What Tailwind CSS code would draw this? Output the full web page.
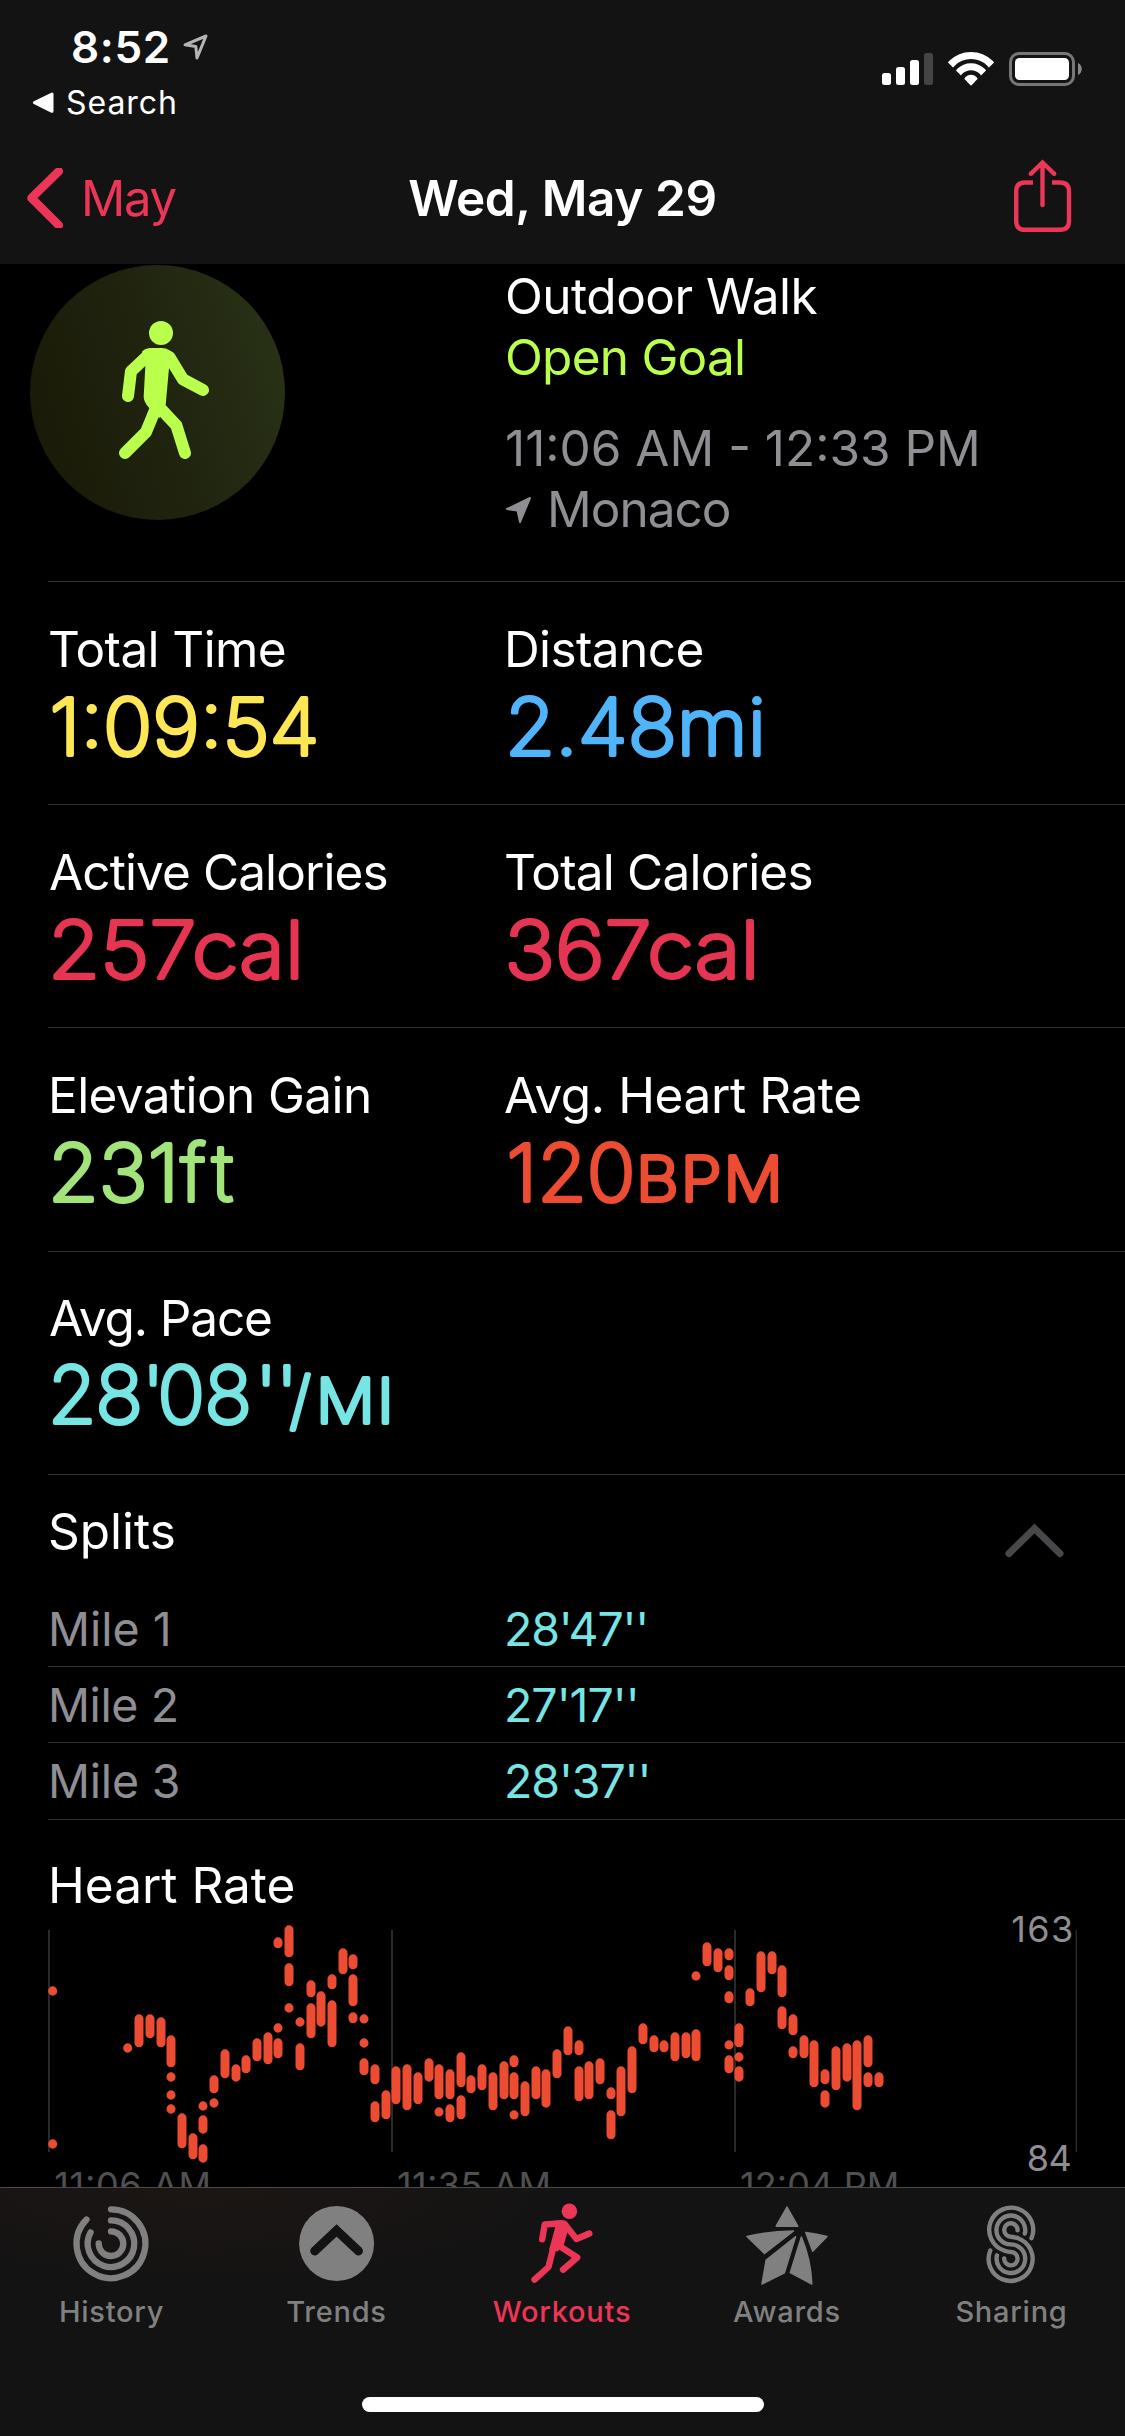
<!DOCTYPE html>
<html lang="en">
<head>
<meta charset="utf-8">
<title>Workout</title>
<script src="https://cdn.jsdelivr.net/npm/@tailwindcss/browser@4"></script>
</head>
<body class="bg-black font-[Inter,sans-serif] text-white">
<div class="flex h-[2436px] w-[1125px] flex-col overflow-hidden bg-black">

  <header class="h-[264px] shrink-0 bg-[#131313]">
    <!-- Status bar -->
    <div class="flex h-[132px] items-start justify-between pr-[43px]">
      <div class="pt-[21px]">
        <div class="flex items-start pl-[71px]">
          <span class="text-[44px] leading-[52px] font-semibold tracking-[0.6px]">8:52</span>
          <svg class="mt-[11px] ml-[11px]" width="28" height="30" viewBox="182 32 28 30"><path d="M185 44.8L206 36L197 58L195.8 46.4Z" fill="none" stroke="#b5b5b5" stroke-width="3" stroke-linejoin="round"/></svg>
        </div>
        <div class="mt-[10px] flex items-center pl-[32px]">
          <svg width="22" height="22" viewBox="32 92 22 22"><path d="M34.5 102.6L52 94V111.3Z" fill="#fff" stroke="#fff" stroke-width="3" stroke-linejoin="round"/></svg>
          <span class="ml-[12px] text-[32px] leading-[40px] tracking-[0.95px]">Search</span>
        </div>
      </div>
      <svg class="mt-[50px]" width="200" height="38" viewBox="882 50 200 38">
        <g fill="#fff">
          <rect x="882" y="73" width="9" height="12" rx="2.5"/>
          <rect x="896" y="67" width="9" height="18" rx="2.5"/>
          <rect x="910" y="60" width="9" height="25" rx="2.5"/>
          <rect x="924" y="53" width="9" height="32" rx="2.5" fill="#444"/>
        </g>
        <clipPath id="wedge"><path d="M971 85.5L946.5 61V48H995.500V61Z"/></clipPath>
        <g clip-path="url(#wedge)" fill="none" stroke="#fff">
          <circle cx="971" cy="82.500" r="27" stroke-width="7.200"/>
          <circle cx="971" cy="82.500" r="15.800" stroke-width="7"/>
          <circle cx="971" cy="82.500" r="4" fill="#fff" stroke-width="7.500"/>
        </g>
        <rect x="1010.500" y="53.500" width="63" height="31" rx="8.500" fill="none" stroke="#777" stroke-width="3"/>
        <rect x="1015" y="58" width="54" height="22" rx="4.500" fill="#fff"/>
        <path d="M1078 63C1083 65 1083 73 1078 75Z" fill="#888"/>
      </svg>
    </div>
    <!-- Navigation bar -->
    <nav class="grid h-[132px] grid-cols-[1fr_auto_1fr] items-center">
      <div class="flex items-center pl-[24px] text-[#ec3657]">
        <svg width="42" height="60" viewBox="24 168 42 60"><path d="M58.800 171.500L31.500 198.300L58.800 225.500" transform="translate(0 -.3)" fill="none" stroke="currentColor" stroke-width="8.600" stroke-linecap="round" stroke-linejoin="round"/></svg>
        <span class="ml-[15px] mt-px text-[49px] leading-[60px] tracking-[-1.3px]">May</span>
      </div>
      <h1 class="text-[49.500px] leading-[60px] font-semibold tracking-[-0.4px]">Wed, May 29</h1>
      <div class="flex justify-end pr-[51px]">
        <svg width="64" height="80" viewBox="1010 158 64 80"><path d="M1033 182.500H1025Q1016.200 182.500 1016.200 191.500V221Q1016.200 229.800 1025 229.800H1060Q1069 229.800 1069 221V191.500Q1069 182.500 1060 182.500H1052M1042.500 205V162.500M1030.800 173.800L1042.500 162.500L1054.200 173.800" fill="none" stroke="#ec3657" stroke-width="4.400"/><g fill="#ec3657"><circle cx="1042.500" cy="205" r="2.200"/><circle cx="1030.800" cy="173.800" r="2.200"/><circle cx="1054.200" cy="173.800" r="2.200"/></g></svg>
      </div>
    </nav>
  </header>

  <main class="min-h-0 flex-1 overflow-hidden">
    <!-- Workout summary -->
    <section class="flex h-[317px]">
      <svg class="mt-px ml-[30px] shrink-0" width="255" height="255" viewBox="90 30 765 765">
        <defs><linearGradient id="disc" x1="0" y1=".65" x2="1" y2=".35"><stop offset="0" stop-color="#191a07"/><stop offset=".5" stop-color="#20240f"/><stop offset="1" stop-color="#283116"/></linearGradient></defs>
        <circle cx="472.500" cy="412.500" r="382.500" fill="url(#disc)"/>
        <g fill="#bbff4d" stroke="#bbff4d">
          <circle cx="483" cy="234" r="36" stroke="none"/>
          <path stroke="none" d="M426 290Q436 279 452 279H484Q512 280 526 303L507 340L497 450L478 490L447 458Q432 442 431 425L436 334Z"/>
          <g fill="none" stroke-width="36" stroke-linecap="round" stroke-linejoin="round">
            <path d="M445 300L393 349L384 423"/>
            <path d="M508 306L549 373L609 405"/>
            <path d="M468 458L438 531L375 594"/>
            <path d="M484 463L529 511L555 594"/>
          </g>
        </g>
      </svg>
      <div class="ml-[220px] pt-[2px] text-[49.500px] leading-[61px]">
        <p class="tracking-[-0.5px]">Outdoor Walk</p>
        <p class="tracking-[-0.75px] text-[#bbff4d]">Open Goal</p>
        <p class="mt-[30px] text-[#8e8e93]">11:06 AM - 12:33 PM</p>
        <p class="flex items-center tracking-[-1px] text-[#8e8e93]">
          <svg class="mt-px ml-px" width="26" height="28" viewBox="506 498 26 28"><path d="M507 511L530 500L520 524L517.500 512.500Z" fill="currentColor" stroke="currentColor" stroke-width="2" stroke-linejoin="round"/></svg>
          <span class="ml-[15px]">Monaco</span>
        </p>
      </div>
    </section>

    <!-- Metrics -->
    <div class="ml-[48px] border-t border-[#303030] text-[49.500px] leading-[60px]">
      <section class="grid h-[223px] grid-cols-[456px_1fr] border-b border-[#303030] pt-[37px]">
        <div class="tracking-[-0.6px]">Total Time
          <svg class="block h-[110px] w-[456px] overflow-visible font-extralight text-[#fde754]" fill="currentColor" stroke="currentColor" stroke-width="3.800" stroke-linejoin="round" font-size="78.500" letter-spacing="0"><text x="1.500" y="76" textLength="270" lengthAdjust="spacingAndGlyphs">1:09:54</text></svg>
        </div>
        <div class="tracking-[-0.6px]">Distance
          <svg class="block h-[110px] w-[456px] overflow-visible font-extralight text-[#50b4fb]" fill="currentColor" stroke="currentColor" stroke-width="3.800" stroke-linejoin="round" font-size="78.500" letter-spacing="0"><text x="1" y="76" textLength="261" lengthAdjust="spacingAndGlyphs">2.48mi</text></svg>
        </div>
      </section>
      <section class="grid h-[223px] grid-cols-[456px_1fr] border-b border-[#303030] pt-[37px]">
        <div class="pl-px tracking-[-0.9px]">Active Calories
          <svg class="block h-[110px] w-[450px] overflow-visible font-extralight text-[#e53553]" fill="currentColor" stroke="currentColor" stroke-width="3.800" stroke-linejoin="round" font-size="78.500" letter-spacing="0"><text x="-1" y="76" textLength="256" lengthAdjust="spacingAndGlyphs">257cal</text></svg>
        </div>
        <div class="tracking-[-0.8px]">Total Calories
          <svg class="block h-[110px] w-[456px] overflow-visible font-extralight text-[#e53553]" fill="currentColor" stroke="currentColor" stroke-width="3.800" stroke-linejoin="round" font-size="78.500" letter-spacing="0"><text x="0.500" y="76" textLength="255" lengthAdjust="spacingAndGlyphs">367cal</text></svg>
        </div>
      </section>
      <section class="grid h-[224px] grid-cols-[456px_1fr] border-b border-[#303030] pt-[37px]">
        <div class="tracking-[-0.6px]">Elevation Gain
          <svg class="block h-[110px] w-[456px] overflow-visible font-extralight text-[#a2e479]" fill="currentColor" stroke="currentColor" stroke-width="3.800" stroke-linejoin="round" font-size="78.500" letter-spacing="0"><text x="0" y="76" textLength="131" lengthAdjust="spacingAndGlyphs">231</text><text y="76"><tspan x="132.500">f</tspan><tspan x="164">t</tspan></text></svg>
        </div>
        <div class="tracking-[-0.4px]">Avg. Heart Rate
          <svg class="block h-[110px] w-[456px] overflow-visible font-extralight text-[#ec4c31]" fill="currentColor" stroke="currentColor" stroke-width="3.800" stroke-linejoin="round" font-size="78.500" letter-spacing="0"><text x="2.500" y="76" textLength="129" lengthAdjust="spacingAndGlyphs">120</text><text x="132" y="75.500" font-size="61" stroke-width="4.200" textLength="149" letter-spacing="2" lengthAdjust="spacingAndGlyphs">BPM</text></svg>
        </div>
      </section>
      <section class="h-[223px] border-b border-[#303030] pt-[36px]">
        <div class="pl-px tracking-[-1.1px]">Avg. Pace
          <svg class="block h-[110px] w-[456px] overflow-visible font-extralight text-[#78e5e5]" fill="currentColor" stroke="currentColor" stroke-width="3.800" stroke-linejoin="round" font-size="78.500" letter-spacing="0"><text y="75"><tspan x="-1" letter-spacing="-1">28</tspan><tspan x="93">'</tspan><tspan x="108.500" letter-spacing="-0.500">08</tspan><tspan x="206" letter-spacing="-1.500">''</tspan><tspan x="240.500" font-size="64">/</tspan></text><text x="267" y="74.500" font-size="61" stroke-width="4.200" textLength="80" letter-spacing="2" lengthAdjust="spacingAndGlyphs">MI</text></svg>
        </div>
      </section>
    </div>

    <!-- Splits -->
    <section class="ml-[48px]">
      <div class="flex h-[116px] items-start justify-between pt-[26px] pr-[60px]">
        <h2 class="text-[49.500px] leading-[60px]">Splits</h2>
        <svg class="mt-[20px]" width="62" height="40" viewBox="1003 1521 62 40"><path d="M1009 1553.500L1034.500 1528.500L1060 1553.500" fill="none" stroke="#48484a" stroke-width="7" stroke-linecap="round"/></svg>
      </div>
      <div class="text-[46.500px] leading-[76px]">
        <div class="grid h-[76px] grid-cols-[456px_1fr] border-b border-[#303030]"><span class="text-[#8e8e93]">Mile 1</span><span class="tracking-[-1.2px] text-[#78e5e5]">28'47''</span></div>
        <div class="grid h-[76px] grid-cols-[456px_1fr] border-b border-[#303030]"><span class="tracking-[-0.4px] text-[#8e8e93]">Mile 2</span><span class="tracking-[-1px] text-[#78e5e5]">27'17''</span></div>
        <div class="grid h-[77px] grid-cols-[456px_1fr] border-b border-[#303030]"><span class="tracking-[-0.2px] text-[#8e8e93]">Mile 3</span><span class="tracking-[-1.1px] text-[#78e5e5]">28'37''</span></div>
      </div>
    </section>

    <!-- Heart rate chart -->
    <section class="pt-[35px]">
      <h2 class="pl-[48px] text-[49.500px] leading-[60px]">Heart Rate</h2>
      <svg class="block overflow-visible" width="1125" height="272" viewBox="-90 45 3375 816">
        <g fill="#2a2a2a">
          <rect x="54" y="90" width="6" height="666"/>
          <rect x="1083" y="90" width="6" height="666"/>
          <rect x="2112" y="90" width="6" height="666"/>
          <rect x="3137" y="90" width="4" height="666"/>
        </g>
        <path id="beats" fill="none" stroke="#ec4c31" stroke-width="27" stroke-linecap="round"/>
        <g font-size="108" fill="#8e8e93">
          <text x="2944" y="126" textLength="186">163</text>
          <text x="2990" y="813" textLength="135">84</text>
        </g>
        <g font-size="108" fill="#505052">
          <text x="73" y="895" textLength="470">11:06 AM</text>
          <text x="1101" y="895" textLength="462">11:35 AM</text>
          <text x="2130" y="895" textLength="478">12:04 PM</text>
        </g>
      </svg>
    </section>
  </main>

  <!-- Tab bar -->
  <footer class="h-[249px] shrink-0 border-t border-[#4a4a4a] bg-[#131313] bg-[radial-gradient(ellipse_at_18%_0%,#1c1614,#131313_30%)]">
    <nav class="-ml-px grid w-[1125px] grid-cols-5 text-center text-[29px] leading-[36px] font-medium tracking-[0.75px] text-[#808080]">
      <div>
        <svg class="mx-auto block" width="90" height="106" viewBox="67 2188 90 106"><g fill="none" stroke="currentColor" stroke-width="6.300" stroke-linecap="round"><path d="M111 2209.300A34.400 34.400 0 1 1 86.500 2219.500"/><path d="M111 2220.400A23.300 23.300 0 1 1 90.600 2232.400"/><path d="M111 2231.400A12.300 12.300 0 1 1 98.700 2243.400"/></g></svg>
        <div>History</div>
      </div>
      <div>
        <svg class="mx-auto block" width="90" height="106" viewBox="292 2188 90 106"><circle cx="336.600" cy="2243.500" r="37.500" fill="currentColor"/><path d="M314.700 2251L336.600 2230.500L358.500 2251" fill="none" stroke="#131313" stroke-width="9" stroke-linecap="round"/></svg>
        <div>Trends</div>
      </div>
      <div class="text-[#ec3657]">
        <svg class="mx-auto block" width="90" height="106" viewBox="517 2188 90 106">
          <circle cx="569.400" cy="2211.300" r="7.800" fill="currentColor"/>
          <path d="M552 2221L562 2220Q566.500 2220.500 568.500 2224L567.500 2232L563.500 2246L557.500 2251.500L549 2250L555 2228Z" fill="currentColor"/>
          <g fill="none" stroke="currentColor" stroke-width="6.400" stroke-linecap="round" stroke-linejoin="round"><path d="M560 2223.400L544.700 2224.500L542.200 2239.300"/><path d="M564.500 2224L576.500 2239L589.300 2233.500"/><path d="M553 2249L548.500 2267L534.500 2279.700"/><path d="M559.500 2246L577.200 2257.500L563 2269.700"/></g>
        </svg>
        <div class="pl-px">Workouts</div>
      </div>
      <div>
        <svg class="mx-auto block" width="90" height="106" viewBox="742 2188 90 106"><g fill="currentColor" stroke="currentColor" stroke-width="1.500" stroke-linejoin="round"><path d="M787 2207L776.200 2226.200H797.800Z"/><path d="M747 2236.500Q768 2231.500 793.500 2231L764.500 2253.500Z"/><path d="M805.800 2232.500Q817 2233.800 827 2236.500L812.700 2251.300Z"/><path d="M795.500 2236.800L766.200 2260L762 2284L784.400 2272.800Z"/><path d="M801.400 2237L790.300 2272.600L811.800 2284Q811 2260 801.400 2237Z"/></g></svg>
        <div class="pl-px">Awards</div>
      </div>
      <div>
        <svg class="mx-auto block" width="90" height="106" viewBox="967 2188 90 106"><g fill="none" stroke="currentColor" stroke-width="4.400" stroke-linecap="round"><path d="M1031.500 2238.200A22 22 0 1 0 1004 2250.500Q1008 2252 1011 2252A6.700 6.700 0 1 1 1004.200 2258.500"/><path d="M1024.800 2233.500A14.400 14.400 0 1 0 1010.900 2244.400A14.300 14.300 0 1 1 997 2255.300"/><path d="M1017.600 2230.300A6.700 6.700 0 1 0 1010.900 2236.700Q1014 2236.900 1018 2238.200A22 22 0 1 1 990.300 2250.500"/></g></svg>
        <div>Sharing</div>
      </div>
    </nav>
    <div class="mx-auto mt-[67px] h-[15px] w-[402px] rounded-full bg-white"></div>
  </footer>
</div>

<script>
  // Heart rate ranges: column centre, then top/bottom pairs
  const columns = [
    [68,259,287,718,746],[293,430,458],[327,343,442],[360,343,415],[393,352,442],[423,406,502,517,545,571,599,613,641],
    [456,640,745],[489,700,778],[519,604,632,646,701,733,788],[552,526,580,595,623],[585,448,535],[618,493,545],[648,466,520],
    [681,415,484],[714,397,493],[744,112,145,370,398,415,475],[777,76,172,190,259,310,338],[810,352,380,430,511],
    [843,241,292,310,415],[873,274,380],[906,223,268,301,442],[939,145,223],[969,163,208,223,319,337,370],
    [1002,343,370,415,443,475,526],[1035,493,553,604,667],[1068,571,658],[1098,499,613],[1131,493,631],[1164,517,613],
    [1197,475,545],[1227,493,598,622,649],[1260,508,598,613,667],[1293,457,562,586,658],[1323,526,580],[1356,493,571],
    [1389,517,631],[1422,484,598],[1452,466,502,517,598,631,658],[1485,544,649],[1518,499,598],[1548,508,623],[1581,448,535],
    [1614,379,466],[1647,421,466,499,604],[1677,484,598],[1710,475,553],[1743,562,598,631,718],[1773,499,649],[1806,439,580],
    [1839,370,433],[1872,406,457],[1902,421,457],[1935,397,484],[1968,397,475],[1998,214,242,388,484],[2031,127,199],
    [2064,145,217],[2097,145,181,196,241,274,310,421,448,466,520],[2127,370,442,457,485,499,545],[2160,265,319],
    [2193,154,277],[2226,154,223],[2256,196,292,319,388],[2289,343,406,439,475],[2322,406,475],[2352,421,562],
    [2385,508,553,571,623],[2418,439,571],[2451,430,545],[2481,421,631],[2514,406,502,517,562],[2547,517,562]
  ];
  let d = '';
  for (const [x, ...spans] of columns)
    for (let i = 0; i < spans.length; i += 2)
      d += `M${x} ${spans[i] + 13.5}V${Math.max(spans[i + 1] - 13.5, spans[i] + 14)}`;
  document.getElementById('beats').setAttribute('d', d);
</script>
</body>
</html>
